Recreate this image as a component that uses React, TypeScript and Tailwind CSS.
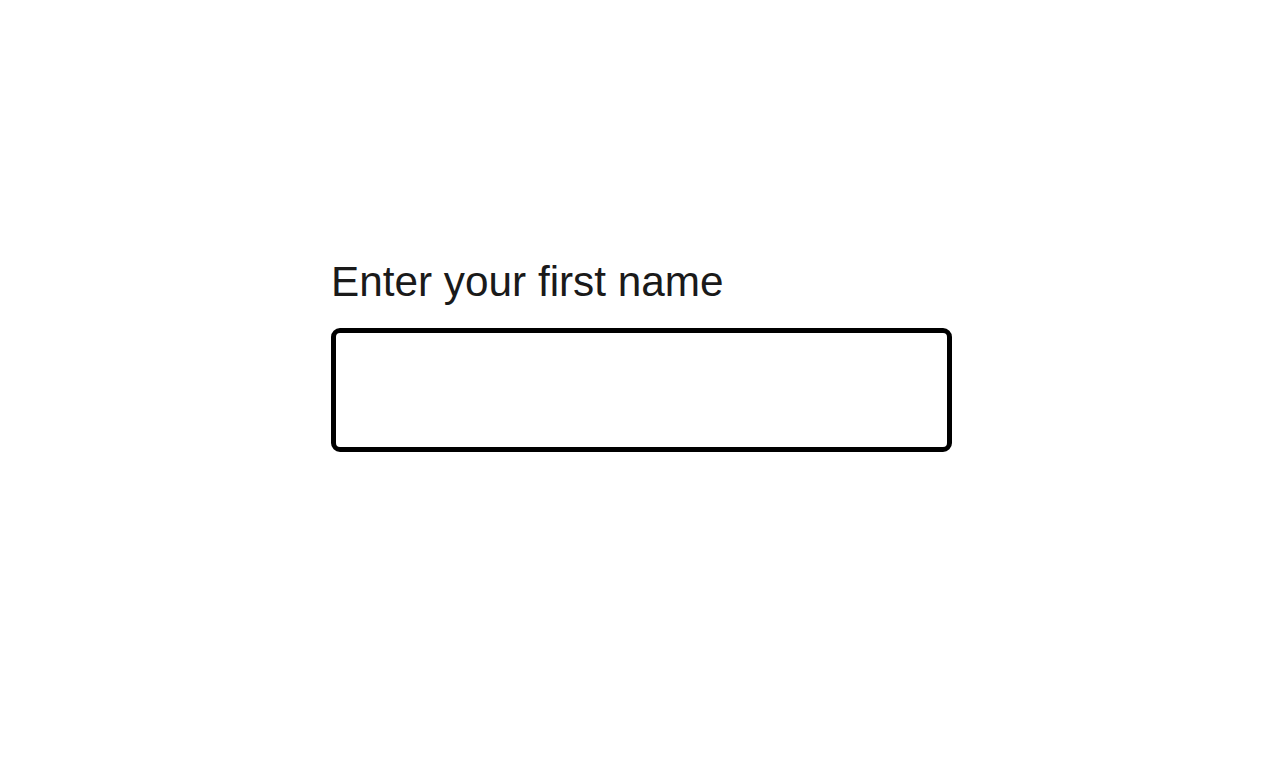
import React from "react";

export default function App() {
  return (
    <div className="min-h-screen bg-white" style={{ fontFamily: '"Liberation Sans", Arial, sans-serif' }}>
      <div className="pt-[258px] pl-[331px]">
        <label htmlFor="first" className="block text-[42.3px] leading-[48px] text-[#1a1a1a]">
          Enter your first name
        </label>
        <input
          id="first"
          type="text"
          className="mt-[22px] block w-[621px] h-[124px] border-[5px] border-black rounded-[9px] bg-white outline-none px-4 text-[32px]"
        />
      </div>
    </div>
  );
}
